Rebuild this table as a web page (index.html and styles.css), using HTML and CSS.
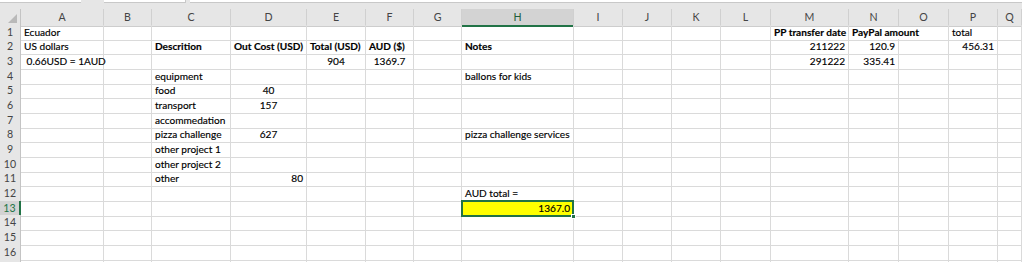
FILE: index.html
```html
<!DOCTYPE html>
<html lang="en">
<head>
<meta charset="utf-8">
<title>Ecuador budget</title>
<link rel="stylesheet" href="styles.css">
</head>
<body>
<div class="topbar">
  <div class="box namebox"></div>
  <div class="box fxbox"></div>
  <div class="box formula"></div>
</div>
<div class="sheet">
  <div class="row head">
    <div class="corner"><svg width="21" height="15" viewBox="0 0 21 15"><polygon points="8,13 17,13 17,4" fill="#b9b9b9"/></svg></div>
    <div>A</div><div>B</div><div>C</div><div>D</div><div>E</div><div>F</div><div>G</div><div class="sel">H</div><div>I</div><div>J</div><div>K</div><div>L</div><div>M</div><div>N</div><div>O</div><div>P</div><div>Q</div>
  </div>
  <div class="row">
    <div class="rh">1</div>
    <div>Ecuador</div><div></div><div></div><div></div><div></div><div></div><div></div><div></div><div></div><div></div><div></div><div></div><div class="b">PP transfer date</div><div class="b spill">PayPal amount</div><div></div><div>total</div><div></div>
  </div>
  <div class="row">
    <div class="rh">2</div>
    <div>US dollars</div><div></div><div class="b">Descrition</div><div class="b">Out Cost (USD)</div><div class="b">Total (USD)</div><div class="b">AUD ($)</div><div></div><div class="b">Notes</div><div></div><div></div><div></div><div></div><div class="r">211222</div><div class="r">120.9</div><div></div><div class="r">456.31</div><div></div>
  </div>
  <div class="row">
    <div class="rh">3</div>
    <div>&nbsp;0.66USD = 1AUD</div><div></div><div></div><div></div><div class="m">904</div><div class="m">1369.7</div><div></div><div></div><div></div><div></div><div></div><div></div><div class="r">291222</div><div class="r">335.41</div><div></div><div></div><div></div>
  </div>
  <div class="row">
    <div class="rh">4</div>
    <div></div><div></div><div>equipment</div><div></div><div></div><div></div><div></div><div>ballons for kids</div><div></div><div></div><div></div><div></div><div></div><div></div><div></div><div></div><div></div>
  </div>
  <div class="row">
    <div class="rh">5</div>
    <div></div><div></div><div>food</div><div class="m">40</div><div></div><div></div><div></div><div></div><div></div><div></div><div></div><div></div><div></div><div></div><div></div><div></div><div></div>
  </div>
  <div class="row">
    <div class="rh">6</div>
    <div></div><div></div><div>transport</div><div class="m">157</div><div></div><div></div><div></div><div></div><div></div><div></div><div></div><div></div><div></div><div></div><div></div><div></div><div></div>
  </div>
  <div class="row">
    <div class="rh">7</div>
    <div></div><div></div><div>accommedation</div><div></div><div></div><div></div><div></div><div></div><div></div><div></div><div></div><div></div><div></div><div></div><div></div><div></div><div></div>
  </div>
  <div class="row">
    <div class="rh">8</div>
    <div></div><div></div><div>pizza challenge</div><div class="m">627</div><div></div><div></div><div></div><div>pizza challenge services</div><div></div><div></div><div></div><div></div><div></div><div></div><div></div><div></div><div></div>
  </div>
  <div class="row">
    <div class="rh">9</div>
    <div></div><div></div><div>other project 1</div><div></div><div></div><div></div><div></div><div></div><div></div><div></div><div></div><div></div><div></div><div></div><div></div><div></div><div></div>
  </div>
  <div class="row">
    <div class="rh">10</div>
    <div></div><div></div><div>other project 2</div><div></div><div></div><div></div><div></div><div></div><div></div><div></div><div></div><div></div><div></div><div></div><div></div><div></div><div></div>
  </div>
  <div class="row">
    <div class="rh">11</div>
    <div></div><div></div><div>other</div><div class="r">80</div><div></div><div></div><div></div><div></div><div></div><div></div><div></div><div></div><div></div><div></div><div></div><div></div><div></div>
  </div>
  <div class="row">
    <div class="rh">12</div>
    <div></div><div></div><div></div><div></div><div></div><div></div><div></div><div>AUD total =</div><div></div><div></div><div></div><div></div><div></div><div></div><div></div><div></div><div></div>
  </div>
  <div class="row">
    <div class="rh sel">13</div>
    <div></div><div></div><div></div><div></div><div></div><div></div><div></div><div class="r active">1367.0</div><div></div><div></div><div></div><div></div><div></div><div></div><div></div><div></div><div></div>
  </div>
  <div class="row">
    <div class="rh">14</div>
    <div></div><div></div><div></div><div></div><div></div><div></div><div></div><div></div><div></div><div></div><div></div><div></div><div></div><div></div><div></div><div></div><div></div>
  </div>
  <div class="row">
    <div class="rh">15</div>
    <div></div><div></div><div></div><div></div><div></div><div></div><div></div><div></div><div></div><div></div><div></div><div></div><div></div><div></div><div></div><div></div><div></div>
  </div>
  <div class="row">
    <div class="rh">16</div>
    <div></div><div></div><div></div><div></div><div></div><div></div><div></div><div></div><div></div><div></div><div></div><div></div><div></div><div></div><div></div><div></div><div></div>
  </div>
  <div class="row">
    <div class="rh"></div>
    <div></div><div></div><div></div><div></div><div></div><div></div><div></div><div></div><div></div><div></div><div></div><div></div><div></div><div></div><div></div><div></div><div></div>
  </div>
</div>
</body>
</html>
```
FILE: styles.css
```css
html, body {
  margin: 0;
  padding: 0;
  background: #fff;
  overflow: hidden;
}

body {
  font-family: Lato, "Liberation Sans", sans-serif;
  font-size: 10.1px;
  color: #000;
}

/* strip left over from the name box / formula bar */
.topbar {
  height: 9px;
  background: #e6e6e6;
  display: flex;
  align-items: flex-start;
}

.box {
  height: 3px;
  background: #fff;
  border-bottom: 1px solid #c8c8c8;
  box-sizing: border-box;
}

.namebox { width: 81px; }
.fxbox { width: 82px; margin-left: 23px; border-right: 1px solid #c8c8c8; }
.formula { flex: 1; margin-left: 4px; }

/* worksheet grid */
.sheet {
  display: flex;
  flex-direction: column;
}

.row {
  display: grid;
  grid-template-columns: 21px 83px 48px 79px 76px 59px 48px 48px 112px 49px 49px 49px 50px 78px 50px 50px 49px 1fr;
  height: 14.7px;
}

.row > div {
  box-sizing: border-box;
  border-right: 1px solid #dadada;
  border-bottom: 1px solid #dadada;
  padding: 0 3px 0 3px;
  white-space: nowrap;
  line-height: 15px;
  min-width: 0;
  -webkit-text-stroke: 0.15px #000;
}

/* column letters */
.row.head {
  height: 15.5px;
}

.row.head > div {
  background: #e6e6e6;
  color: #444;
  font-size: 10.6px;
  text-align: center;
  line-height: 16px;
  border-right: 1px solid #d0d0d0;
  border-bottom: 1px solid #cdcdcd;
  padding: 0;
  -webkit-text-stroke: 0;
}

.row.head > .corner {
  border-right: 1px solid #c4c4c4;
}

.corner svg {
  display: block;
  margin-top: 1px;
}

.row.head > .sel {
  background: #d3d3d3;
  color: #1f5f3a;
  border-bottom: 2px solid #217346;
}

/* row numbers */
.row > .rh {
  background: #e6e6e6;
  color: #444;
  font-size: 10.6px;
  text-align: center;
  padding: 0;
  border-right: 1px solid #c4c4c4;
  border-bottom: 1px solid #d2d2d2;
  -webkit-text-stroke: 0;
}

.row > .rh.sel {
  background: #d3d3d3;
  color: #217346;
  border-right: 2px solid #217346;
}

.b { font-weight: bold; }
.r { text-align: right; }
.m { text-align: center; }

/* text running on into the empty cell beside it */
.row > .spill {
  border-right-color: transparent;
  overflow: visible;
}

/* selected cell */
.row > .active {
  position: relative;
  background: #ffff00;
}

.active::after {
  content: "";
  position: absolute;
  left: -1px;
  top: -1px;
  right: -1px;
  bottom: -1px;
  border: 2px solid #217346;
  pointer-events: none;
}

.active::before {
  content: "";
  position: absolute;
  right: -3px;
  bottom: -3px;
  width: 5px;
  height: 5px;
  background: #217346;
  border: 1px solid #fff;
  box-sizing: border-box;
  z-index: 1;
}
```
